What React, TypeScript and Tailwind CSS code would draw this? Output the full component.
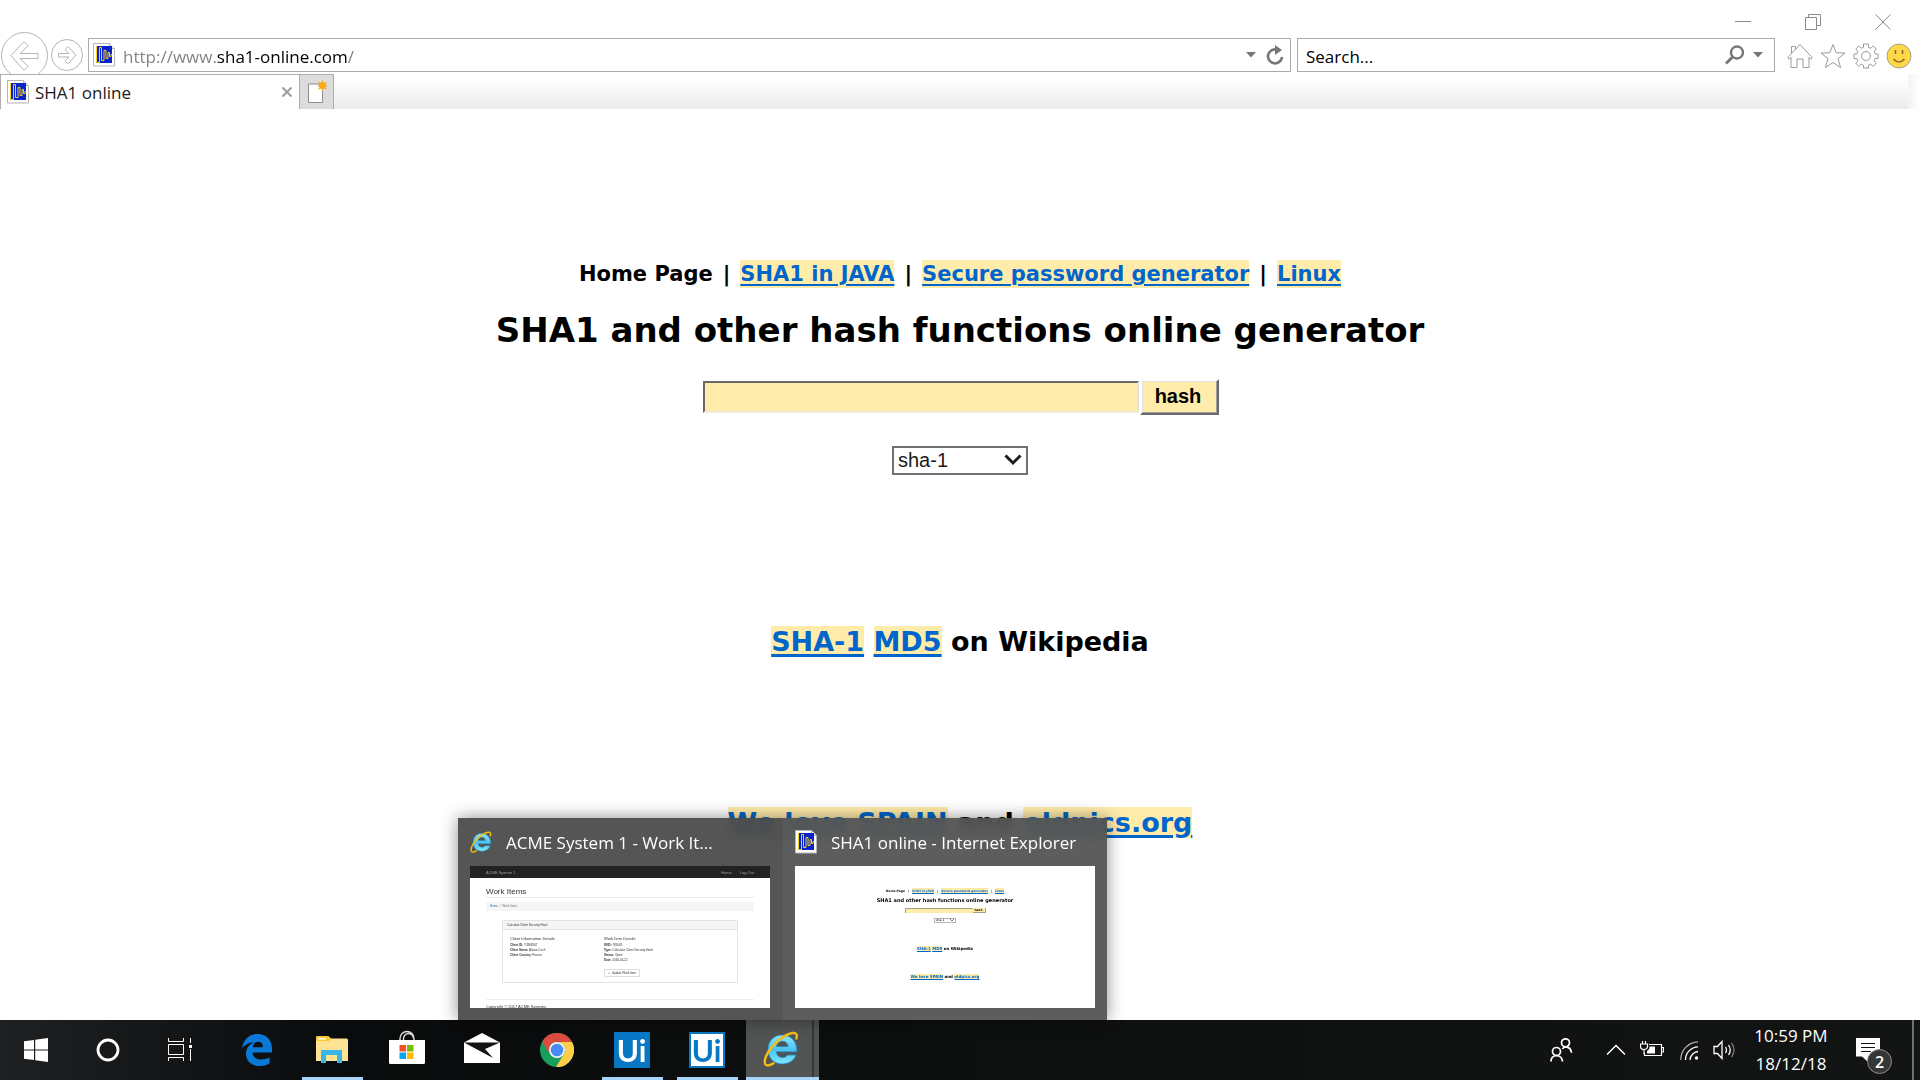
import React from "react";

const ui = "font-['Open_Sans','Noto_Sans',sans-serif]";

function SiteIcon({ className }: { className: string }) {
  return (
    <svg viewBox="0 0 22 24" className={className} aria-hidden="true">
      <path d="M0.5 0.5h16l5 5v17.500h-21z" fill="#fff" stroke="#b5b5b5" />
      <path d="M16.500 0.5v5h5" fill="#f4f4f4" stroke="#b5b5b5" />
      <path d="M3 3h16v17H3z" fill="#0a24cc" />
      <path d="M3.500 3v16.500H6.500V4.500h2v13h2.500V7.500h2V15.500h2V9.500h1.500v4h1.500V11.500H19" fill="none" stroke="#f5d21c" strokeWidth="1" />
    </svg>
  );
}

function ExplorerIcon({ className }: { className: string }) {
  return (
    <svg viewBox="0 0 36 36" className={className} aria-hidden="true">
      <defs>
        <linearGradient id="ieBlue" x1="0" y1="0" x2="0" y2="1">
          <stop offset="0" stopColor="#8fe6fb" />
          <stop offset="0.5" stopColor="#4cc3ee" />
          <stop offset="1" stopColor="#7ee8fc" />
        </linearGradient>
      </defs>
      <path
        d="M19 4C10.500 4 5 10.500 5 18.500 5 27 11 33 19.500 33c6.500 0 11.500-3.500 13.500-9h-8.500c-1 1.700-2.700 2.500-4.900 2.500-3.600 0-6-2.200-6.200-5.700H33.800C34.500 11 28.500 4 19 4zM13.500 15.500c.5-3.200 2.700-5.200 5.900-5.200 3.300 0 5.400 2 5.700 5.200z"
        fill="url(#ieBlue)"
        stroke="#1a86c4"
        strokeWidth="0.8"
      />
      <path
        d="M33 8.500C34.800 4 33.500 1.500 29.500 2 22 3 11 12 5.500 20.500 1.500 27 .5 33 3.500 34.200c2 .8 5-.4 8-2.400"
        fill="none"
        stroke="#f3bd13"
        strokeWidth="2.400"
      />
    </svg>
  );
}

function BrowserChrome() {
  return (
    <header className={`${ui} bg-white text-[#1a1a1a]`}>
      <div className="flex h-[38px] items-end justify-end gap-[54px] pr-[29px] pb-2">
        <button aria-label="Minimize" className="flex h-4 w-4 items-center">
          <svg viewBox="0 0 16 16" className="h-4 w-4"><path d="M0 7.500h16" stroke="#8a8a8a" /></svg>
        </button>
        <button aria-label="Restore" className="h-4 w-4">
          <svg viewBox="0 0 16 16" className="h-4 w-4" fill="none" stroke="#8a8a8a"><path d="M.5 3.500h11v12H.5zM3.500 3V.5h12v11H12" /></svg>
        </button>
        <button aria-label="Close" className="h-4 w-4">
          <svg viewBox="0 0 16 16" className="h-4 w-4"><path d="M.5.5l15 15M15.500.5l-15 15" stroke="#8a8a8a" /></svg>
        </button>
      </div>

      <div className="flex h-9 items-start">
        <div className="flex w-[88px] shrink-0 gap-[3px] pl-px">
          <button aria-label="Back" className="-mt-1.5 -mb-3 h-[47px] w-[47px]">
            <svg viewBox="0 0 47 47" className="h-[47px] w-[47px]" fill="none" stroke="#b4b4b4">
              <circle cx="23.500" cy="23.500" r="23" fill="#fff" />
              <path d="M10 23.500l12-13 1.500-.2 3 2.700v1.500l-7.500 7H37v5H19l7.500 7V35l-3 2.700-1.500-.2z" />
            </svg>
          </button>
          <button aria-label="Forward" className="mt-px h-8 w-8">
            <svg viewBox="0 0 32 32" className="h-8 w-8" fill="none" stroke="#b4b4b4">
              <circle cx="16" cy="16" r="15.500" fill="#fff" />
              <path d="M25 16l-7.500-8h-1l-2 2v1l3.500 3.500H7.500v3.500H18L14.500 21.500v1l2 2h1z" />
            </svg>
          </button>
        </div>
        <div className="flex h-[34px] flex-1 items-center border border-[#ababab] pr-1.5 pl-1">
          <SiteIcon className="h-6 w-[22px]" />
          <input
            aria-label="Address"
            className="ml-2 flex-1 bg-[linear-gradient(to_right,#808080_94px,#000_94px,#000_224px,#808080_224px)] bg-clip-text pt-1 text-[17px] leading-7 text-transparent outline-none"
            defaultValue="http://www.sha1-online.com/"
          />
          <button aria-label="Show address history" className="mr-2.5">
            <svg viewBox="0 0 10 6" className="h-1.5 w-2.5"><path d="M0 0h10L5 5.500z" fill="#777" /></svg>
          </button>
          <button aria-label="Refresh">
            <svg viewBox="0 0 18 20" className="h-5 w-[18px]">
              <path d="M13.500 6A7 7 0 1 0 16 12" fill="none" stroke="#777" strokeWidth="2.600" />
              <path d="M9 0l7 5-7 5z" fill="#777" />
            </svg>
          </button>
        </div>
        <form className="ml-1.5 flex h-[34px] w-[478px] shrink-0 items-center border border-[#ababab] pr-[11px] pl-2">
          <input aria-label="Search the web" placeholder="Search..." className="min-w-0 flex-1 pt-1 text-[17px] leading-7 outline-none placeholder:text-black" />
          <button type="button" aria-label="Search">
            <svg viewBox="0 0 20 20" className="h-5 w-5" fill="none" stroke="#777">
              <circle cx="12" cy="7.500" r="6" strokeWidth="2.400" />
              <path d="M7.500 12L1 18.500" strokeWidth="3" />
            </svg>
          </button>
          <button type="button" aria-label="Search options" className="ml-2">
            <svg viewBox="0 0 10 6" className="h-1.5 w-2.5"><path d="M0 0h10L5 5.500z" fill="#777" /></svg>
          </button>
        </form>
        <div className="flex h-9 shrink-0 items-center gap-[7px] pr-2 pl-3">
          <button aria-label="Home">
            <svg viewBox="0 0 26 26" className="h-[26px] w-[26px]" fill="none" stroke="#9b9b9b">
              <path d="M.8 14.500L13 1.500l12.200 13-1.200 1.700-2-2V24.500h-6V16h-6v8.500H4V14.200l-2 2zM4.500 10.500V3.500h4v3" />
            </svg>
          </button>
          <button aria-label="Favorites">
            <svg viewBox="0 0 26 26" className="h-[26px] w-[26px]" fill="none" stroke="#9b9b9b">
              <path d="M13 1.500l3.200 8.300 8.800.3-7 5.500 2.600 9L13 19.500l-7.600 5.100 2.600-9-7-5.500 8.800-.3z" />
            </svg>
          </button>
          <button aria-label="Tools">
            <svg viewBox="0 0 26 26" className="h-[26px] w-[26px]" fill="none" stroke="#9b9b9b">
              <path d="M10.500 1h5v3.300l2.300 1L20.200 3l3 3-2 2.600 1 2.400H25v4.500h-2.800l-1 2.400 2 2.400-3 3.200-2.400-2.300-2.300 1V25h-5v-2.800l-2.300-1-2.400 2.300-3-3.200 2-2.400-1-2.400H1V11h2.800l1-2.400-2-2.600 3-3 2.400 2.300 2.300-1z" />
              <circle cx="13" cy="13" r="4.500" />
            </svg>
          </button>
          <button aria-label="Send feedback">
            <svg viewBox="0 0 26 26" className="h-[26px] w-[26px]">
              <circle cx="13" cy="13" r="12" fill="#ffd84a" stroke="#a9a28a" />
              <path d="M9.500 7v4M16.500 7v4" stroke="#8a6a20" strokeWidth="1.600" />
              <path d="M7.500 16q5.500 6 11 0" fill="none" stroke="#8a6a20" strokeWidth="1.600" />
            </svg>
          </button>
        </div>
      </div>

      <div className="flex h-[35px]">
        <div className="flex w-[300px] items-center border border-b-0 border-[#adadad] bg-white px-1.5">
          <SiteIcon className="h-6 w-[22px]" />
          <span className="ml-1.5 flex-1 pt-0.5 text-[17px]">SHA1 online</span>
          <button aria-label="Close tab">
            <svg viewBox="0 0 12 12" className="h-3 w-3"><path d="M1.500 1.500l9 9M10.500 1.500l-9 9" stroke="#a0a0a0" strokeWidth="2.200" /></svg>
          </button>
        </div>
        <button aria-label="New tab" className="flex w-[34px] items-center justify-center border-t border-r border-[#adadad] bg-[#dcdcdc]">
          <svg viewBox="0 0 22 24" className="h-6 w-[22px]">
            <path d="M2.500 4h14v18.500h-14z" fill="#fff" stroke="#8d8d8d" />
            <path d="M16.500 0l1.200 2.800L21 2l-1.500 2.700 2.500 1-2.500 1L21 9.500l-3.300-1L16.500 11.500 15.300 8.500 12 9.500l1.500-2.800-2.500-1 2.500-1L12 2l3.300.8z" fill="#fba919" />
          </svg>
        </button>
        <div className="flex-1 bg-linear-to-b from-white from-15% to-[#ebebeb]" />
        <div className="w-3 bg-linear-to-r from-[#f3f3f3] to-white" />
      </div>
    </header>
  );
}

function PageLink({ children }: { children: React.ReactNode }) {
  return (
    <a href="#" className="bg-[#ffecab] text-[#0066cc] underline decoration-2 underline-offset-3">
      {children}
    </a>
  );
}

function HashPage() {
  return (
    <main className="flex flex-1 flex-col items-center bg-white font-['DejaVu_Sans',Verdana,sans-serif] font-bold text-black">
      <nav className="mt-[151px] flex gap-2.5 text-[21px] leading-7">
        <span>Home Page</span>
        <span>|</span>
        <PageLink>SHA1 in JAVA</PageLink>
        <span>|</span>
        <PageLink>Secure password generator</PageLink>
        <span>|</span>
        <PageLink>Linux</PageLink>
      </nav>
      <h1 className="mt-[22px] text-[34px] leading-10">SHA1 and other hash functions online generator</h1>
      <form className="flex flex-col items-center">
        <div className="mt-[29px] flex items-center pl-px">
          <input
            aria-label="Text to hash"
            className="h-8 w-[436px] border-2 border-t-[#696969] border-r-[#e3e3e3] border-b-[#f3eeda] border-l-[#696969] bg-[#ffecab] px-1 font-['Liberation_Sans',sans-serif] text-[20px] font-normal"
          />
          <button
            type="button"
            className="ml-px h-9 w-[79px] border-2 border-t-white border-r-[#696969] border-b-[#696969] border-l-white bg-[#ffecab] pr-0.5 pb-0.5 font-['Liberation_Sans',sans-serif] text-[20px] leading-7 font-bold shadow-[inset_-1px_-1px_0_#a0a0a0,inset_1px_1px_0_#e3e3e3]"
          >
            hash
          </button>
        </div>
        <div className="relative mt-[31px]">
          <select
            aria-label="Algorithm"
            className="block h-[29px] w-[136px] appearance-none border-2 border-[#707070] bg-white pb-0.5 pl-1 font-['Liberation_Sans',sans-serif] text-[20px] leading-6 font-normal text-[#1a1a1a]"
          >
            <option>sha-1</option>
            <option>md5</option>
          </select>
          <svg viewBox="0 0 18 12" className="pointer-events-none absolute top-2 right-1.5 h-3 w-[18px]" aria-hidden="true">
            <path d="M1.500 1.500L9 9l7.500-7.500" fill="none" stroke="#1e1e1e" strokeWidth="3" />
          </svg>
        </div>
      </form>
      <p className="mt-[151px] text-[27px] leading-8 [&_a]:decoration-3">
        <PageLink>SHA-1</PageLink> <PageLink>MD5</PageLink> on Wikipedia
      </p>
      <p className="mt-[149px] text-[27px] leading-8 [&_a]:decoration-3">
        <PageLink>We love SPAIN</PageLink> and <PageLink>oldpics.org</PageLink>
      </p>
    </main>
  );
}

function WorkItemsThumb() {
  return (
    <div className="flex h-[142px] flex-col overflow-hidden bg-white font-['Liberation_Sans',sans-serif] text-[3px] leading-[5px] text-[#333]">
      <div className="flex h-3 shrink-0 items-center bg-[#222] px-4 text-[4px] text-[#9d9d9d]">
        <span className="flex-1">ACME System 1</span>
        <span className="mr-2">Home</span>
        <span>Log Out</span>
      </div>
      <div className="mx-4 mt-2 h-[13px] border-b border-[#eee] text-[8px] leading-[11px]">Work Items</div>
      <div className="mx-4 mt-1 h-[9px] bg-[#f5f5f5] px-1 leading-[9px] text-[#777]">
        <span className="text-[#337ab7]">Home</span>&nbsp; / &nbsp;Work Items
      </div>
      <div className="mx-8 mt-[9px] h-[63px] shrink-0 border border-[#e4e4e4]">
        <div className="h-[9px] border-b border-[#e4e4e4] bg-[#f5f5f5] px-1 leading-[9px]">Calculate Client Security Hash</div>
        <div className="flex px-[7px] pt-1.5">
          <div className="w-[94px]">
            <div className="mb-px text-[4px] leading-[6px]">Client Information Details</div>
            <div><b>Client ID:</b> YJ868567</div>
            <div><b>Client Name:</b> Alvaro Cash</div>
            <div><b>Client Country:</b> France</div>
          </div>
          <div>
            <div className="mb-px text-[4px] leading-[6px]">Work Item Details</div>
            <div><b>WIID:</b> 785065</div>
            <div><b>Type:</b> Calculate Client Security Hash</div>
            <div><b>Status:</b> Open</div>
            <div><b>Date:</b> 2018-05-22</div>
            <div className="mt-1.5 w-9 border border-[#ddd] text-center leading-[6px]">✓ Update Work Item</div>
          </div>
        </div>
      </div>
      <div className="mx-4 mt-4 border-t border-[#eee] pt-1 text-[4px]">Copyright © 2017 ACME Systems</div>
    </div>
  );
}

function ThumbLink({ children }: { children: React.ReactNode }) {
  return <span className="bg-[#ffecab] text-[#0066cc] underline">{children}</span>;
}

function HashPageThumb() {
  return (
    <div className="flex h-[142px] flex-col items-center bg-white pt-[22px] font-['DejaVu_Sans',Verdana,sans-serif] font-bold text-black">
      <div className="flex gap-[3px] text-[3px] leading-[6px]">
        <span>Home Page</span>
        <span>|</span>
        <ThumbLink>SHA1 in JAVA</ThumbLink>
        <span>|</span>
        <ThumbLink>Secure password generator</ThumbLink>
        <span>|</span>
        <ThumbLink>Linux</ThumbLink>
      </div>
      <div className="mt-0.5 text-[5px] leading-[9px]">SHA1 and other hash functions online generator</div>
      <div className="mt-[3px] flex h-[5px]">
        <div className="w-[68px] border-t border-l border-[#a5a08a] bg-[#ffecab]" />
        <div className="w-[13px] border-r border-b border-[#a5a08a] bg-[#ffecab] text-center text-[3px] leading-[4px]">hash</div>
      </div>
      <div className="mt-[5px] flex h-[5px] w-[22px] items-center justify-between border border-[#b5b5b5] px-px text-[3px] leading-[3px] font-normal">
        <span>sha-1</span>
        <svg viewBox="0 0 4 3" className="h-[3px] w-1"><path d="M0 0l2 2 2-2" fill="none" stroke="#222" strokeWidth="0.6" /></svg>
      </div>
      <div className="mt-[23px] text-[4px] leading-[6px]">
        <ThumbLink>SHA-1</ThumbLink> <ThumbLink>MD5</ThumbLink> on Wikipedia
      </div>
      <div className="mt-[22px] text-[4px] leading-[6px]">
        <ThumbLink>We love SPAIN</ThumbLink> and <ThumbLink>oldpics.org</ThumbLink>
      </div>
    </div>
  );
}

function Previews() {
  return (
    <div className="absolute bottom-full left-[458px] flex bg-[#484848]/93 text-[17px] text-white shadow-[0_0_16px_rgba(0,0,0,0.45)] backdrop-blur-[6px]">
      <div className="w-[325px] pr-[13px] pb-3 pl-3">
        <div className="flex h-12 items-center">
          <ExplorerIcon className="h-6 w-[22px]" />
          <span className="ml-3.5 pt-0.5">ACME System 1 - Work It...</span>
        </div>
        <WorkItemsThumb />
      </div>
      <div className="w-[324px] bg-white/5 px-3 pb-3">
        <div className="flex h-12 items-center">
          <SiteIcon className="h-6 w-[22px]" />
          <span className="ml-3.5 pt-0.5">SHA1 online - Internet Explorer</span>
        </div>
        <HashPageThumb />
      </div>
    </div>
  );
}

function Slot({ label, open, children }: { label: string; open?: boolean; children: React.ReactNode }) {
  return (
    <button aria-label={label} className="relative flex h-15 w-[75px] items-center justify-center pr-0.5">
      {children}
      {open && <span className="absolute bottom-0 left-[7px] h-[3px] w-[61px] bg-[#a9d3f8]" />}
    </button>
  );
}

function Taskbar() {
  return (
    <footer className={`${ui} relative flex h-15 shrink-0 bg-[#0e1010] bg-linear-to-r from-[#1e2021] from-0% via-[#0a0b0c] via-18% to-[#131515] to-100% text-white`}>
      <Previews />
      <button aria-label="Start" className="flex w-18 items-center justify-center">
        <svg viewBox="0 0 24 24" className="h-6 w-6" fill="#fff"><path d="M0 3.300L10 2v9.500H0zM11.200 1.800L24 0v11.500H11.200zM0 12.600h10V22L0 20.700zM11.200 12.600H24V24l-12.800-1.800z" /></svg>
      </button>
      <button aria-label="Cortana" className="flex w-18 items-center justify-center">
        <svg viewBox="0 0 24 24" className="h-6 w-6"><circle cx="12" cy="12" r="10" fill="none" stroke="#fff" strokeWidth="2.800" /></svg>
      </button>
      <button aria-label="Task view" className="mr-1 flex w-18 items-center justify-center">
        <svg viewBox="0 0 24 24" className="h-6 w-6" fill="none" stroke="#fff">
          <path d="M.5 0v3.500h15V0M.5 6.500h15v10H.5zM.5 23v-3.500h15V23M22.500 0v5M22.500 11v12" />
          <path d="M21 7h3v3h-3z" fill="#fff" stroke="none" />
        </svg>
      </button>
      <Slot label="Edge">
        <svg viewBox="0 0 30 32" className="h-8 w-[30px]">
          <path d="M0 14C1.500 5.500 7.500 0 15.500 0 25 0 30 6.500 30 15v3.500H10.500c.3 4.800 4 7 9 7 3 0 5.600-.8 8-2.200v6.200C24.800 31.200 21.500 32 17.500 32 9.500 32 4 27.300 4 20c0-5.200 2.800-9.500 8-12C7 8.500 3 10.500 0 14zm10.700-.8h10.200c0-3.700-1.700-5.400-4.700-5.400-2.800 0-4.900 2-5.500 5.400z" fill="#0a78d7" />
        </svg>
      </Slot>
      <Slot label="File Explorer" open>
        <svg viewBox="0 0 32 28" className="h-7 w-8">
          <path d="M0 1.500Q0 0 1.500 0H12l3 2.500h15.500Q32 2.500 32 4v21H0z" fill="#ffe394" />
          <path d="M0 4V1.500Q0 0 1.500 0H12l3 3-2 2H0z" fill="#fcc92f" />
          <path d="M2 2h8v1.500H2z" fill="#fff" />
          <path d="M5 14h21v13h-5v-8H10v8H5z" fill="#3bb4e8" />
        </svg>
      </Slot>
      <Slot label="Store">
        <svg viewBox="0 0 36 36" className="-mt-1 h-9 w-9">
          <path d="M11 11V8.500a7 7 0 0 1 14 0V11M14.500 11V8.500a5 5 0 0 1 10 0" fill="none" stroke="#ddd" strokeWidth="1.400" />
          <path d="M0 10h36v22.500Q36 34 34.500 34h-33Q0 34 0 32.500z" fill="#fff" />
          <path d="M10.500 15H17v6.500h-6.500z" fill="#f25022" /><path d="M18 15h6.500v6.500H18z" fill="#7fba00" />
          <path d="M10.500 22.500H17V29h-6.500z" fill="#00a4ef" /><path d="M18 22.500h6.500V29H18z" fill="#ffb900" />
        </svg>
      </Slot>
      <Slot label="Mail">
        <svg viewBox="0 0 36 30" className="-mt-1 h-[30px] w-9"><path d="M0 9.500L18 0l18 9.500V30H0z" fill="#fff" /><path d="M0 9.500h36L21 16l8 9z" fill="#111314" /></svg>
      </Slot>
      <Slot label="Chrome">
        <svg viewBox="0 0 34 34" className="h-[34px] w-[34px]">
          <circle cx="17" cy="17" r="17" fill="#17a05d" />
          <path d="M2.300 8.500A17 17 0 0 1 32 9H17a8 8 0 0 0-7.500 5.500l-1 5z" fill="#dc4b3f" />
          <path d="M32 9a17 17 0 0 1-16 25l8-13q1.800-3 .5-7L20 9z" fill="#fece49" />
          <circle cx="17" cy="17" r="8" fill="#f3f3f3" /><circle cx="17" cy="17" r="6.300" fill="#4a8af4" />
        </svg>
      </Slot>
      <Slot label="UiPath Studio" open>
        <span className="flex h-9 w-9 items-center justify-center rounded-[1px] bg-[#0878c4] font-['Lato',sans-serif] text-[30px] leading-8 font-bold text-white">Ui</span>
      </Slot>
      <Slot label="UiPath Robot" open>
        <span className="flex h-9 w-9 items-center justify-center rounded-[1px] border-2 border-[#0878c4] bg-white font-['Lato',sans-serif] text-[30px] leading-8 font-bold text-[#0878c4]">Ui</span>
      </Slot>
      <button aria-label="Internet Explorer" className="ml-px flex w-[73px] items-center border-b-3 border-[#a9d3f8] bg-[#525454]">
        <ExplorerIcon className="ml-[17px] h-9 w-9 flex-none" />
        <span className="ml-[13px] h-full w-0.5 bg-[#353737]" />
      </button>

      <div className="ml-auto flex items-center">
        <button aria-label="People" className="mr-[33px]">
          <svg viewBox="0 0 23 24" className="h-6 w-[23px]" fill="none" stroke="#fff" strokeWidth="1.700">
            <circle cx="15.500" cy="4.800" r="4" /><circle cx="6.500" cy="13.500" r="4" />
            <path d="M1 23.500q0-5.500 5.500-6 5.500.5 6 6M12.500 11q1-2.200 3-2.200 5.500.2 6 6" />
          </svg>
        </button>
        <button aria-label="Show hidden icons" className="mr-3.5">
          <svg viewBox="0 0 20 12" className="h-3 w-5"><path d="M1 10.500l9-9 9 9" fill="none" stroke="#fff" strokeWidth="1.500" /></svg>
        </button>
        <button aria-label="Battery" className="mr-4">
          <svg viewBox="0 0 24 18" className="h-[18px] w-6" fill="none" stroke="#fff">
            <path d="M9 3.500h12.500v11h-17V12M22 6.500h1.500v4.500H22M2.500 0v2.500M5.500 0v2.500M.5 3h7v3q-.5 2.500-3.500 2.500T.5 6zM4 9v4" strokeWidth="1.200" />
            <path d="M9.500 5.500H15v7H7V10q2-1 2.500-3z" fill="#fff" stroke="none" />
          </svg>
        </button>
        <button aria-label="Network" className="mr-3.5">
          <svg viewBox="0 0 19 19" className="h-[19px] w-[19px]" fill="none" stroke="#fff" strokeWidth="1.300">
            <path d="M.7 19A18 18 0 0 1 18 .8" stroke="#aaa" /><path d="M5.500 19A13 13 0 0 1 18 5.800M10 19a9 9 0 0 1 8-8.500" />
            <circle cx="16.500" cy="17" r="1.700" fill="#fff" stroke="none" />
          </svg>
        </button>
        <button aria-label="Volume" className="mr-[18px]">
          <svg viewBox="0 0 23 20" className="h-5 w-[23px]" fill="none" stroke="#fff" strokeWidth="1.300">
            <path d="M1 6.500h3.500L9 1.500v17l-4.500-5H1zM12.500 7q2 3 0 6M15.500 5q3.500 5 0 10" /><path d="M18.500 3q5 7 0 14" stroke="#777" />
          </svg>
        </button>
        <button className="w-[74px] text-center text-[17px] leading-7">
          <span className="block whitespace-nowrap">10:59 PM</span>
          <span className="block whitespace-nowrap">18/12/18</span>
        </button>
        <button aria-label="Notifications" className="relative ml-7 h-9 w-9">
          <svg viewBox="0 0 24 24" className="h-6 w-6"><path d="M0 0h24v18.500H12V24l-6-5.500H0z" fill="#fff" /><path d="M5 5.500h14M5 9.500h14M5 13.500h10" stroke="#111" strokeWidth="1.200" /></svg>
          <span className="absolute right-0 -bottom-1.5 flex h-[25px] w-[25px] items-center justify-center rounded-full border border-[#8a8a8a] bg-[#353737] text-[16px] leading-5 font-semibold">2</span>
        </button>
        <button aria-label="Show desktop" className="ml-5 h-15 w-2 border-l-2 border-[#6f7171]" />
      </div>
    </footer>
  );
}

export default function App() {
  return (
    <div className="flex min-h-screen flex-col bg-white">
      <BrowserChrome />
      <HashPage />
      <Taskbar />
    </div>
  );
}
